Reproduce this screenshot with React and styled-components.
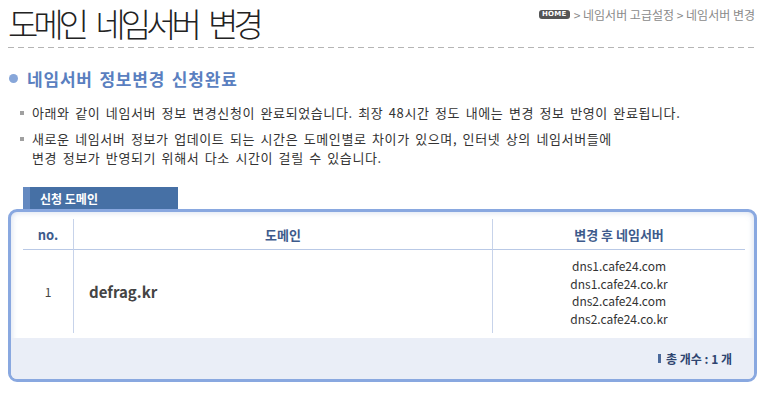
import React from "react";
import styled, { createGlobalStyle } from "styled-components";

const GlobalStyle = createGlobalStyle`
  body {
    margin: 0;
    background: #fff;
    font-family: "Noto Sans CJK KR", "Noto Sans", sans-serif;
    color: #333;
  }
`;

const Page = styled.div`
  width: 749px;
  padding: 0 12px 0 8px;
`;

const Header = styled.div`
  display: flex;
  justify-content: space-between;
  align-items: flex-start;
  height: 48px;
  background-image: linear-gradient(to right, #b5b5b5 60%, transparent 60%);
  background-size: 10px 1px;
  background-repeat: repeat-x;
  background-position: left bottom;
`;

const Title = styled.h1`
  margin: 0;
  padding-top: 2px;
  font-size: 33px;
  line-height: 42px;
  font-weight: 300;
  letter-spacing: -5px;
  word-spacing: 9px;
  color: #222;
`;

const Crumbs = styled.div`
  display: flex;
  align-items: center;
  gap: 4px;
  margin: 6px 2px 0 0;
  font-size: 12px;
  color: #8a8a8a;
`;

const HomeBadge = styled.span`
  display: inline-block;
  background: #555;
  color: #fff;
  font-family: "DejaVu Sans", sans-serif;
  font-size: 7px;
  font-weight: bold;
  line-height: 9px;
  padding: 0 3px;
  border-radius: 3px;
  letter-spacing: 0.3px;
`;

const SectionTitle = styled.h2`
  display: flex;
  align-items: center;
  gap: 9px;
  margin: 18px 0 0 1px;
  font-size: 17px;
  font-weight: bold;
  letter-spacing: 0.8px;
  word-spacing: 2px;
  color: #5a7fc0;
  &::before {
    content: "";
    width: 9px;
    height: 9px;
    border-radius: 50%;
    background: #87a6d9;
  }
`;

const Notes = styled.ul`
  list-style: none;
  margin: 12px 0 0 0;
  padding: 0 0 0 12px;
  font-size: 13px;
  line-height: 19px;
  letter-spacing: 0.6px;
  word-spacing: 2px;
  color: #333;
`;

const Note = styled.li`
  position: relative;
  padding-left: 12px;
  margin-bottom: 7px;
  &::before {
    content: "";
    position: absolute;
    left: 0;
    top: 8px;
    width: 4px;
    height: 4px;
    background: #a0a0a0;
  }
`;

const Tab = styled.div`
  display: flex;
  align-items: center;
  width: 155px;
  height: 22px;
  margin: 20px 0 0 15px;
  background: linear-gradient(to right, #6489c0 7px, #4670a5 7px);
  color: #fff;
  font-size: 12px;
  font-weight: bold;
  padding-left: 17px;
  box-sizing: border-box;
`;

const Box = styled.div`
  border: 3px solid #89a8e0;
  border-radius: 9px;
  box-shadow: inset 0 0 6px rgba(120, 150, 200, 0.35);
  overflow: hidden;
`;

const Table = styled.div`
  display: grid;
  grid-template-columns: 50px 419px 253px;
  margin: 7px 9px 5px 12px;
`;

const Head = styled.div`
  height: 30px;
  display: flex;
  align-items: center;
  justify-content: center;
  font-size: 13px;
  font-weight: bold;
  color: #3e5b8c;
  border-bottom: 1px solid #b9c9e6;
  border-left: ${(p) => (p.$first ? "none" : "1px solid #c7d3ea")};
`;

const Cell = styled.div`
  height: 83px;
  display: flex;
  flex-direction: column;
  justify-content: ${(p) => (p.$top ? "flex-start" : "center")};
  align-items: ${(p) => (p.$left ? "flex-start" : "center")};
  padding: ${(p) => (p.$top ? "7px 0 0" : p.$left ? "0 0 0 15px" : "0")};
  box-sizing: border-box;
  border-left: ${(p) => (p.$first ? "none" : "1px solid #c7d3ea")};
  font-size: 12px;
  color: #444;
`;

const DomainName = styled.span`
  font-size: 15px;
  font-weight: bold;
  color: #444;
`;

const Server = styled.span`
  font-size: 12px;
  line-height: 17.7px;
  color: #333;
`;

const Footer = styled.div`
  display: flex;
  justify-content: flex-end;
  align-items: center;
  gap: 5px;
  height: 41px;
  padding-right: 22px;
  background: #eaeef7;
  font-size: 12px;
  font-weight: bold;
  color: #2d4470;
  &::before {
    content: "";
    width: 3px;
    height: 9px;
    background: #4b6a9c;
  }
`;

const servers = [
  "dns1.cafe24.com",
  "dns1.cafe24.co.kr",
  "dns2.cafe24.com",
  "dns2.cafe24.co.kr",
];

export default function App() {
  return (
    <Page>
      <GlobalStyle />
      <Header>
        <Title>도메인 네임서버 변경</Title>
        <Crumbs>
          <HomeBadge>HOME</HomeBadge>
          <span>&gt; 네임서버 고급설정 &gt; 네임서버 변경</span>
        </Crumbs>
      </Header>

      <SectionTitle>네임서버 정보변경 신청완료</SectionTitle>
      <Notes>
        <Note>
          아래와 같이 네임서버 정보 변경신청이 완료되었습니다. 최장 48시간 정도
          내에는 변경 정보 반영이 완료됩니다.
        </Note>
        <Note>
          새로운 네임서버 정보가 업데이트 되는 시간은 도메인별로 차이가 있으며,
          인터넷 상의 네임서버들에
          <br />
          변경 정보가 반영되기 위해서 다소 시간이 걸릴 수 있습니다.
        </Note>
      </Notes>

      <Tab>신청 도메인</Tab>
      <Box>
        <Table>
          <Head $first>no.</Head>
          <Head>도메인</Head>
          <Head>변경 후 네임서버</Head>
          <Cell $first>1</Cell>
          <Cell $left>
            <DomainName>defrag.kr</DomainName>
          </Cell>
          <Cell $top>
            {servers.map((s) => (
              <Server key={s}>{s}</Server>
            ))}
          </Cell>
        </Table>
        <Footer>총 개수 : 1 개</Footer>
      </Box>
    </Page>
  );
}
